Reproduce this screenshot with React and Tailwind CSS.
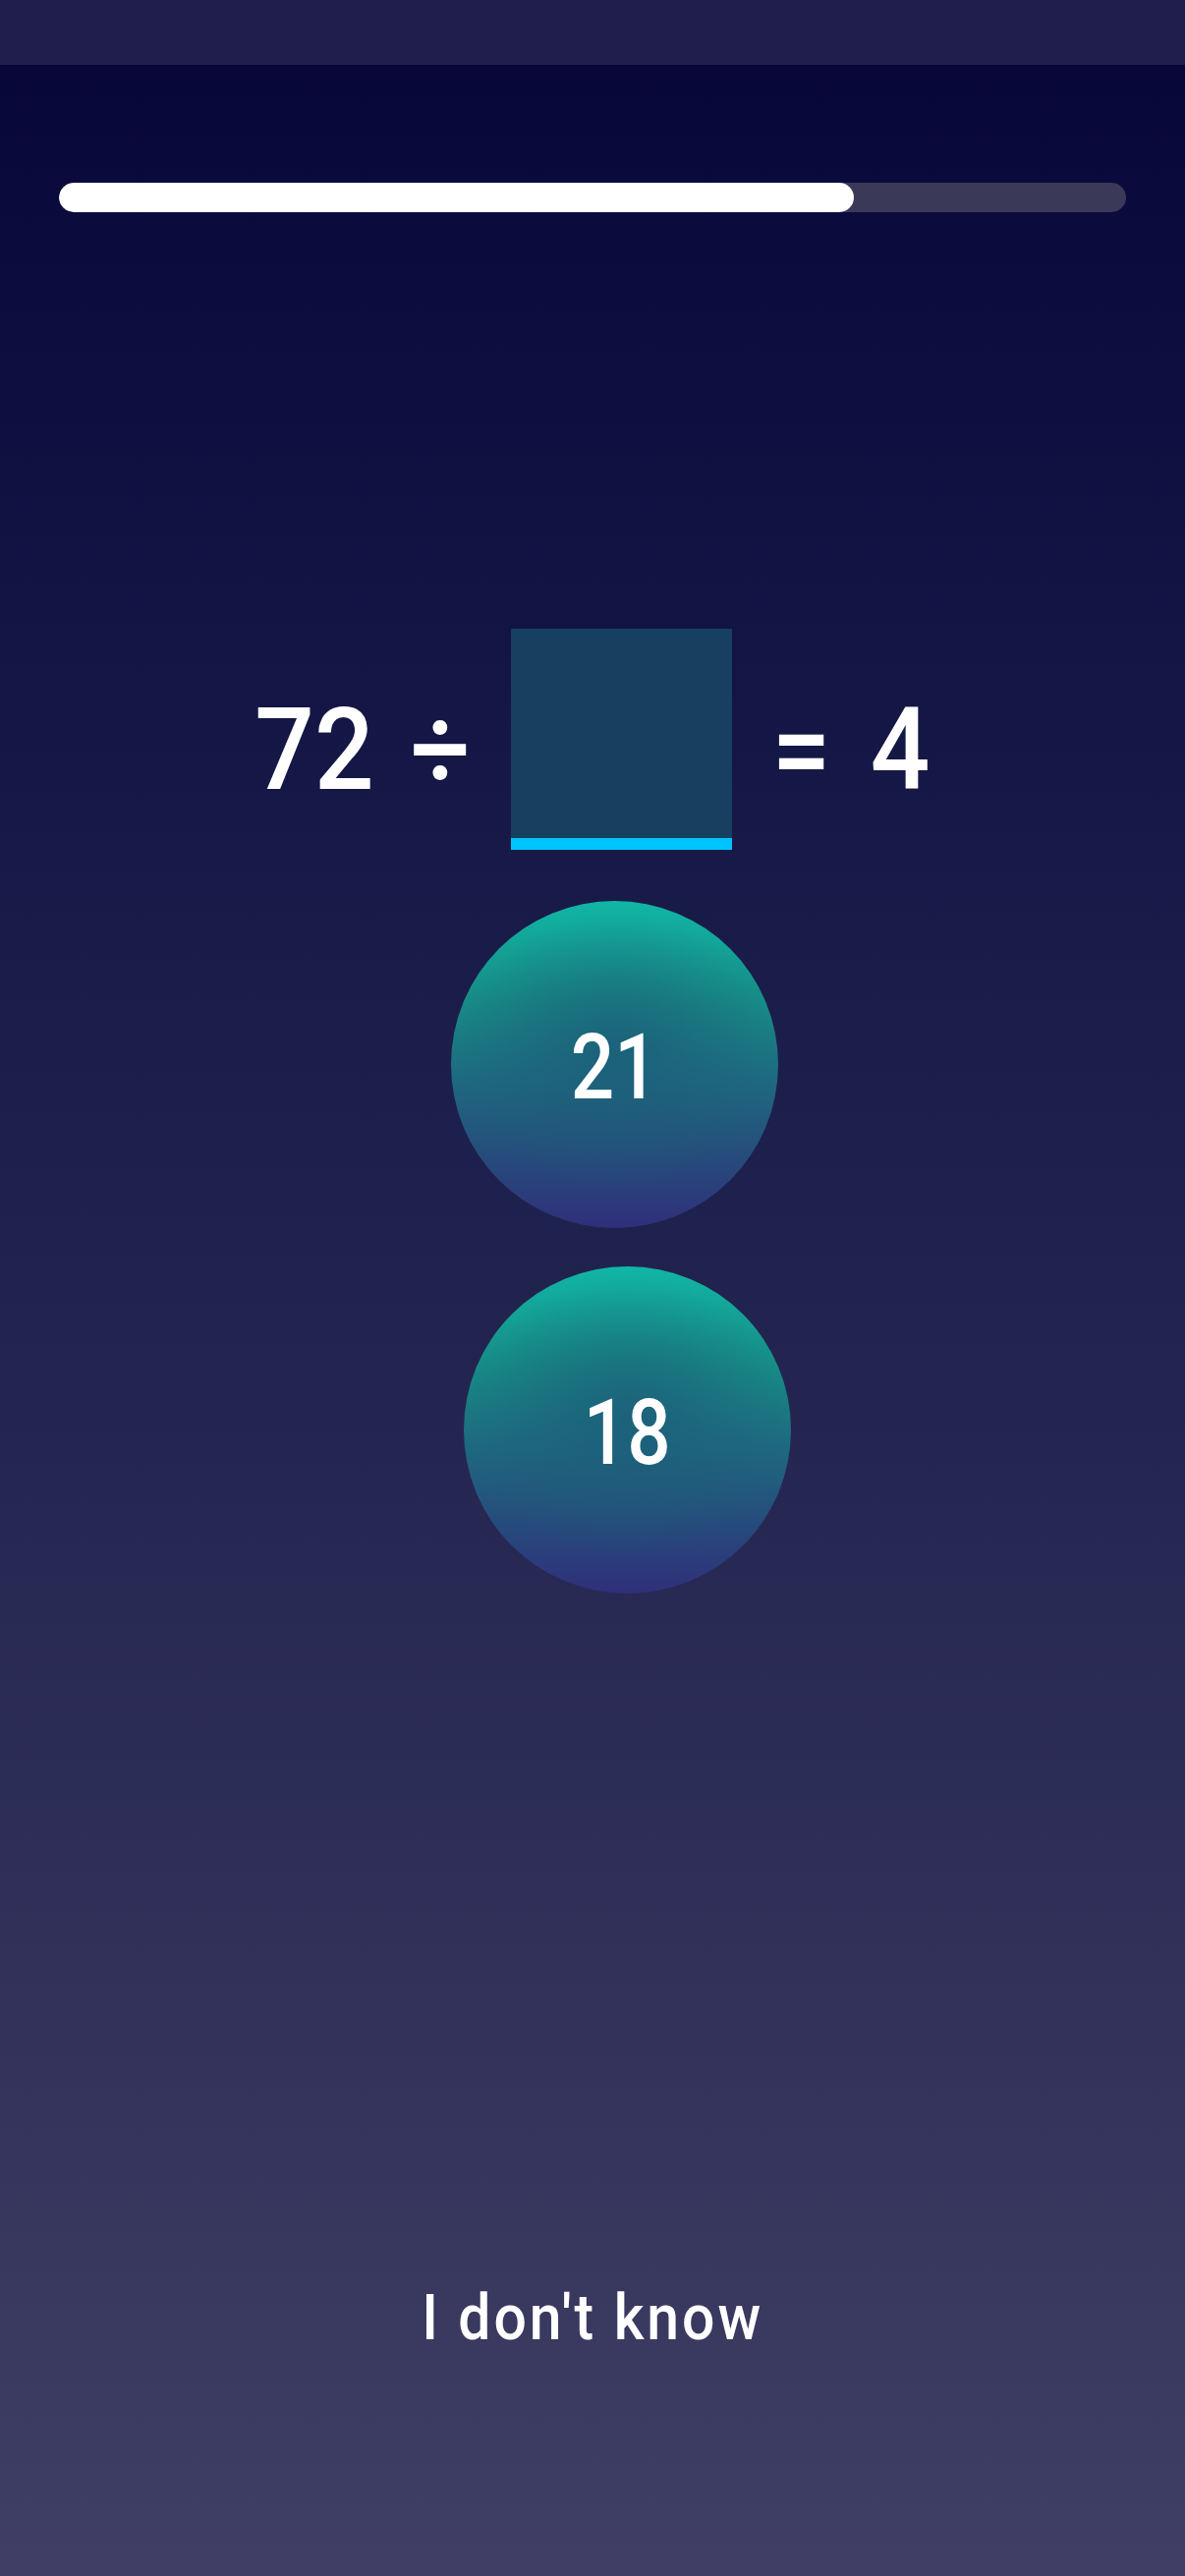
import React from 'react';

const ROBOTO = { fontFamily: 'Roboto, "Noto Sans", sans-serif' };

function ProgressBar({ value }) {
  return (
    <div className="h-[30px] w-full rounded-full bg-[#3b3958] overflow-hidden">
      <div className="h-full rounded-full bg-white" style={{ width: `${value}%` }} />
    </div>
  );
}

function AnswerBubble({ label, className }) {
  return (
    <button
      className={`flex h-[333px] w-[333px] items-center justify-center rounded-full text-white text-[92px] font-medium leading-none bg-[radial-gradient(ellipse_50%_42%_at_50%_46%,rgba(28,92,120,0.8)_0%,rgba(28,92,120,0)_100%),linear-gradient(to_bottom,#11b6a6_0%,#168f88_28%,#1d6d80_52%,#264c7c_78%,#2f2f7a_100%)] ${className}`}
    >
      <span className="mt-[6px] inline-block scale-x-[0.85]">{label}</span>
    </button>
  );
}

function Term({ children, className = '' }) {
  return (
    <span className={`mt-[20px] flex justify-center ${className}`}>
      <span className="inline-block scale-x-[0.92]">{children}</span>
    </span>
  );
}

export default function App() {
  return (
    <div className="flex h-[2622px] w-full flex-col select-none" style={ROBOTO}>
      {/* status bar */}
      <div className="h-[66px] shrink-0 bg-[#201e4c]" />

      <div className="flex flex-1 flex-col bg-linear-to-b from-[#08073a] to-[#403e64] px-[60px] pt-[120px]">
        <ProgressBar value={74.5} />

        {/* equation */}
        <div className="mt-[424px] flex items-center justify-center pr-[6px] text-white text-[116px] font-medium leading-none">
          <Term className="w-[140px]">72</Term>
          <Term className="ml-[24px] w-[70px]">÷</Term>
          <div className="ml-[36px] h-[225px] w-[225px] border-b-[12px] border-[#00c4ff] bg-[#173f5f]" />
          <Term className="ml-[36px] w-[70px]">=</Term>
          <Term className="ml-[30px] w-[70px]">4</Term>
        </div>

        {/* options */}
        <div className="mt-[52px] flex flex-col items-center gap-[39px]">
          <AnswerBubble label="21" className="ml-[44px]" />
          <AnswerBubble label="18" className="ml-[70px]" />
        </div>

        <div className="mt-auto flex justify-center pb-[230px] text-white text-[64px] font-medium leading-none tracking-[0.05em]">
          <span className="inline-block scale-x-[0.92]">I don't know</span>
        </div>
      </div>
    </div>
  );
}
